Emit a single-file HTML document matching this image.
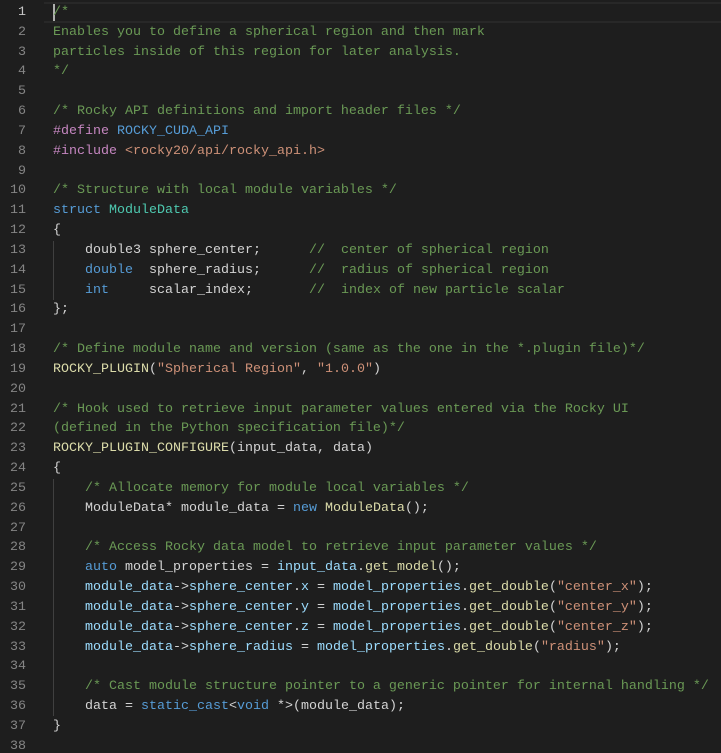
<!DOCTYPE html>
<html><head><meta charset="utf-8"><style>
html,body{margin:0;padding:0;background:#1e1e1e;width:721px;height:753px;overflow:hidden}
.ed{position:relative;font-family:"Liberation Mono",monospace;font-size:13.33px;line-height:19.83px;color:#d4d4d4;padding-top:3px}
.l{position:relative;height:19.83px;white-space:pre}
.n{position:absolute;left:0;width:26px;text-align:right;color:#858585}
.c{position:absolute;left:53px}
.act{box-sizing:border-box;border-top:2px solid #282828;border-bottom:2px solid #282828;position:absolute;left:44px;right:0;top:-1px;height:21px}
.act .cur{position:absolute;left:9px;top:0;width:2px;height:17px;background:#aeafad}
.g{position:absolute;left:53px;width:1px;background:#404040}
.cm{color:#6a9955}.k{color:#569cd6}.p{color:#c586c0}.s{color:#ce9178}.f{color:#dcdcaa}.v{color:#9cdcfe}.t{color:#4ec9b0}
</style></head><body><div class="ed">
<div class="g" style="top:241px;height:59px"></div>
<div class="g" style="top:479px;height:237px"></div>
<div class="l"><div class="act"><div class="cur"></div></div><span class="n" style="color:#c6c6c6">1</span><span class="c cm">/*</span></div>
<div class="l"><span class="n">2</span><span class="c cm">Enables you to define a spherical region and then mark</span></div>
<div class="l"><span class="n">3</span><span class="c cm">particles inside of this region for later analysis.</span></div>
<div class="l"><span class="n">4</span><span class="c cm">*/</span></div>
<div class="l"><span class="n">5</span><span class="c"></span></div>
<div class="l"><span class="n">6</span><span class="c cm">/* Rocky API definitions and import header files */</span></div>
<div class="l"><span class="n">7</span><span class="c"><span class="p">#define</span> <span class="k">ROCKY_CUDA_API</span></span></div>
<div class="l"><span class="n">8</span><span class="c"><span class="p">#include</span> <span class="s">&lt;rocky20/api/rocky_api.h&gt;</span></span></div>
<div class="l"><span class="n">9</span><span class="c"></span></div>
<div class="l"><span class="n">10</span><span class="c cm">/* Structure with local module variables */</span></div>
<div class="l"><span class="n">11</span><span class="c"><span class="k">struct</span> <span class="t">ModuleData</span></span></div>
<div class="l"><span class="n">12</span><span class="c">{</span></div>
<div class="l"><span class="n">13</span><span class="c">    double3 sphere_center;      <span class="cm">//  center of spherical region</span></span></div>
<div class="l"><span class="n">14</span><span class="c">    <span class="k">double</span>  sphere_radius;      <span class="cm">//  radius of spherical region</span></span></div>
<div class="l"><span class="n">15</span><span class="c">    <span class="k">int</span>     scalar_index;       <span class="cm">//  index of new particle scalar</span></span></div>
<div class="l"><span class="n">16</span><span class="c">};</span></div>
<div class="l"><span class="n">17</span><span class="c"></span></div>
<div class="l"><span class="n">18</span><span class="c cm">/* Define module name and version (same as the one in the *.plugin file)*/</span></div>
<div class="l"><span class="n">19</span><span class="c"><span class="f">ROCKY_PLUGIN</span>(<span class="s">"Spherical Region"</span>, <span class="s">"1.0.0"</span>)</span></div>
<div class="l"><span class="n">20</span><span class="c"></span></div>
<div class="l"><span class="n">21</span><span class="c cm">/* Hook used to retrieve input parameter values entered via the Rocky UI</span></div>
<div class="l"><span class="n">22</span><span class="c cm">(defined in the Python specification file)*/</span></div>
<div class="l"><span class="n">23</span><span class="c"><span class="f">ROCKY_PLUGIN_CONFIGURE</span>(input_data, data)</span></div>
<div class="l"><span class="n">24</span><span class="c">{</span></div>
<div class="l"><span class="n">25</span><span class="c">    <span class="cm">/* Allocate memory for module local variables */</span></span></div>
<div class="l"><span class="n">26</span><span class="c">    ModuleData* module_data = <span class="k">new</span> <span class="f">ModuleData</span>();</span></div>
<div class="l"><span class="n">27</span><span class="c"></span></div>
<div class="l"><span class="n">28</span><span class="c">    <span class="cm">/* Access Rocky data model to retrieve input parameter values */</span></span></div>
<div class="l"><span class="n">29</span><span class="c">    <span class="k">auto</span> model_properties = <span class="v">input_data</span>.<span class="f">get_model</span>();</span></div>
<div class="l"><span class="n">30</span><span class="c">    <span class="v">module_data</span>-&gt;<span class="v">sphere_center</span>.<span class="v">x</span> = <span class="v">model_properties</span>.<span class="f">get_double</span>(<span class="s">"center_x"</span>);</span></div>
<div class="l"><span class="n">31</span><span class="c">    <span class="v">module_data</span>-&gt;<span class="v">sphere_center</span>.<span class="v">y</span> = <span class="v">model_properties</span>.<span class="f">get_double</span>(<span class="s">"center_y"</span>);</span></div>
<div class="l"><span class="n">32</span><span class="c">    <span class="v">module_data</span>-&gt;<span class="v">sphere_center</span>.<span class="v">z</span> = <span class="v">model_properties</span>.<span class="f">get_double</span>(<span class="s">"center_z"</span>);</span></div>
<div class="l"><span class="n">33</span><span class="c">    <span class="v">module_data</span>-&gt;<span class="v">sphere_radius</span> = <span class="v">model_properties</span>.<span class="f">get_double</span>(<span class="s">"radius"</span>);</span></div>
<div class="l"><span class="n">34</span><span class="c"></span></div>
<div class="l"><span class="n">35</span><span class="c">    <span class="cm">/* Cast module structure pointer to a generic pointer for internal handling */</span></span></div>
<div class="l"><span class="n">36</span><span class="c">    data = <span class="k">static_cast</span>&lt;<span class="k">void</span> *&gt;(module_data);</span></div>
<div class="l"><span class="n">37</span><span class="c">}</span></div>
<div class="l"><span class="n">38</span><span class="c"></span></div>
</div></body></html>
